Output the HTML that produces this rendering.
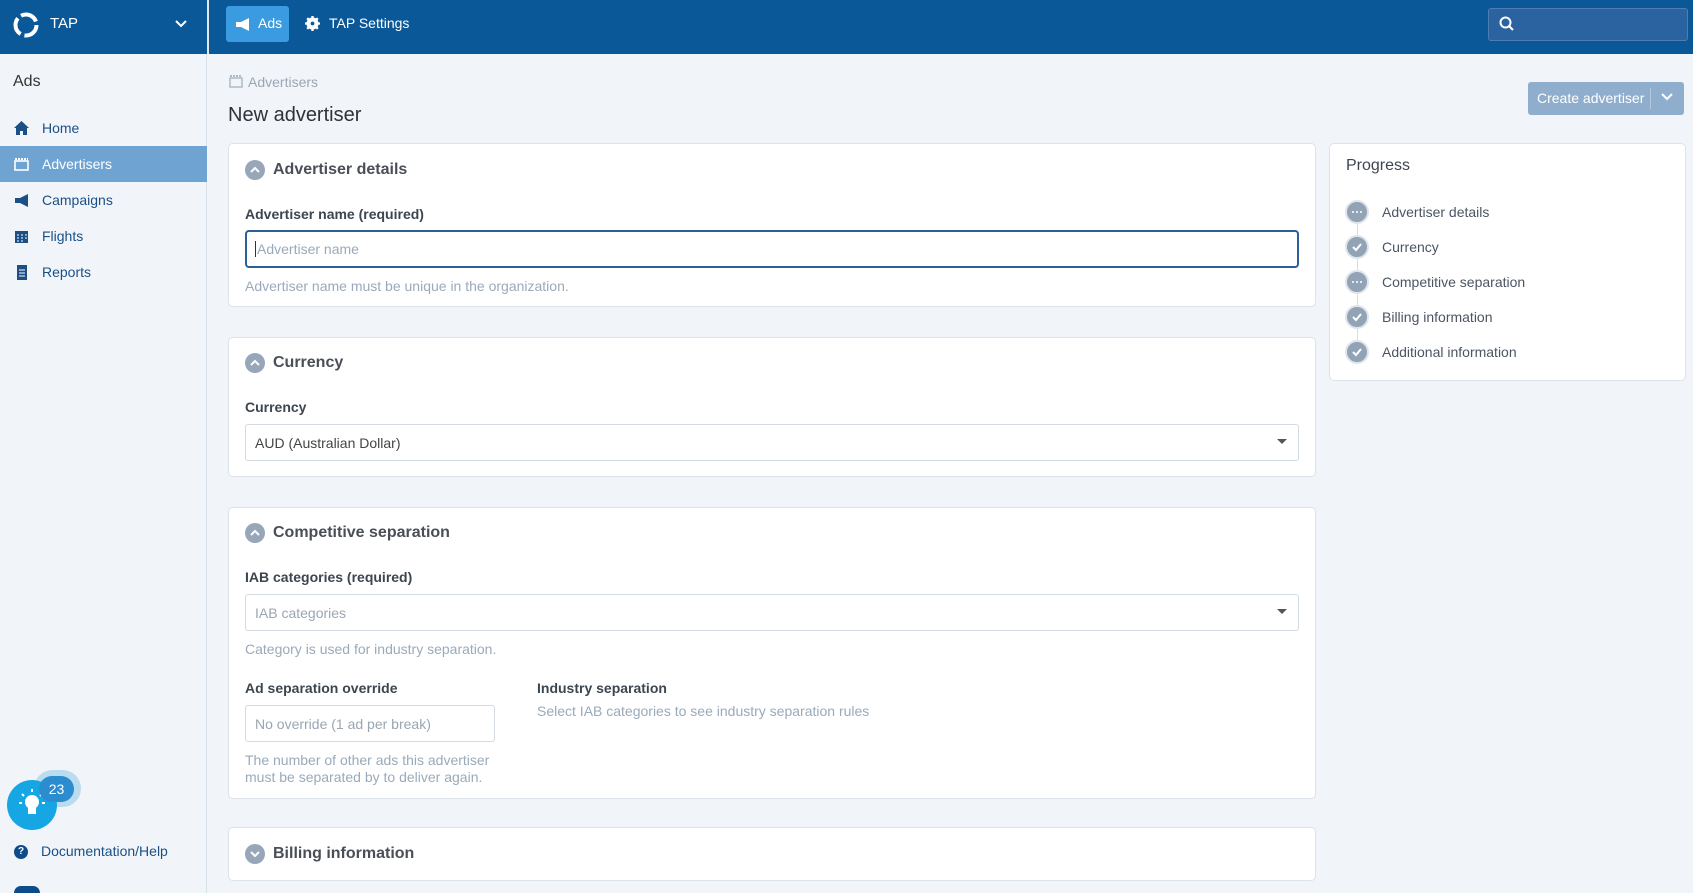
<!DOCTYPE html>
<html style="height:893px;overflow:hidden"><head><style>
*{box-sizing:border-box;margin:0;padding:0}
body{width:1693px;height:893px;overflow:hidden;background:#f1f5f9;font-family:"Liberation Sans",sans-serif;position:relative;color:#333}
.a{position:absolute}
.top{left:0;top:0;width:1693px;height:54px;background:#0a5898}
.side{left:0;top:54px;width:207px;height:839px;border-right:1px solid #d7e1ea;background:#f1f5f9}
.nav{left:0;width:207px;height:36px;display:flex;align-items:center;font-size:14px;color:#1b4f86}
.nav svg{margin-left:14px;margin-right:13px}
.card{background:#fff;border:1px solid #dde3ea;border-radius:5px}
.hd{font-size:16px;font-weight:bold;color:#4a4f57}
.ci{width:20px;height:20px;border-radius:50%;background:#97a6b8}
.lbl{font-size:14px;font-weight:bold;color:#3c4650}
.help{font-size:14px;color:#9aaaba}
.inp{background:#fff;border:1px solid #d3dae2;border-radius:3px;font-size:14px;color:#556;display:flex;align-items:center;padding-left:9px}
.pi{font-size:14px;color:#4b5563}
.pc{width:24px;height:24px;border-radius:50%;background:#92a3b6;border:2px solid #dfe5eb}
</style></head><body>
<div class="a top"></div>
<div class="a" style="left:207px;top:0;width:2px;height:54px;background:#dfe8f1"></div>
<svg class="a" style="left:13px;top:12px" width="26" height="26" viewBox="0 0 26 26"><circle cx="13" cy="13" r="10.5" fill="none" stroke="#fff" stroke-width="4" stroke-dasharray="18 4"/></svg>
<div class="a" style="left:50px;top:15px;color:#fff;font-size:15px">TAP</div>
<svg class="a" style="left:175px;top:19px" width="12" height="10"><path d="M1 2l5 5 5-5" stroke="#fff" stroke-width="2" fill="none"/></svg>
<div class="a" style="left:226px;top:6px;width:63px;height:36px;background:#3b9be0;border-radius:3px"></div>
<svg class="a" style="left:235px;top:18px" width="16" height="13"><path d="M1 4h5l8-4v13l-8-4H1z" fill="#fff"/></svg>
<div class="a" style="left:258px;top:15px;color:#fff;font-size:14px">Ads</div>
<svg class="a" style="left:305px;top:16px" width="15" height="15" viewBox="0 0 16 16"><circle cx="8" cy="8" r="5" fill="none" stroke="#fff" stroke-width="3"/><path d="M8 0v16M0 8h16M2.3 2.3l11.4 11.4M13.7 2.3L2.3 13.7" stroke="#fff" stroke-width="2.5"/><circle cx="8" cy="8" r="2" fill="#0a5898"/></svg>
<div class="a" style="left:329px;top:15px;color:#fff;font-size:14px">TAP Settings</div>
<div class="a" style="left:1488px;top:8px;width:200px;height:33px;background:#2a63a0;border:1px solid #4d7db2;border-radius:3px"></div>
<svg class="a" style="left:1499px;top:16px" width="16" height="16"><circle cx="6.5" cy="6.5" r="5" stroke="#fff" stroke-width="2" fill="none"/><path d="M10 10l4 4" stroke="#fff" stroke-width="2"/></svg>

<div class="a side"></div>
<div class="a" style="left:13px;top:73px;font-size:16px;color:#333">Ads</div>
<div class="a nav" style="top:110px"><svg width="15" height="14"><path d="M7.5 0L0 7h2v7h4v-4h3v4h4V7h2z" fill="#1b4f86"/></svg>Home</div>
<div class="a nav" style="top:146px;background:#6fa4d2;color:#fff"><svg width="15" height="13"><rect x="1" y="3" width="13" height="9" fill="none" stroke="#fff" stroke-width="1.6"/><path d="M1 1h13" stroke="#fff" stroke-width="2" stroke-dasharray="2 1"/></svg>Advertisers</div>
<div class="a nav" style="top:182px"><svg width="15" height="13"><path d="M1 4h5l8-4v13l-8-4H1z" fill="#1b4f86"/></svg>Campaigns</div>
<div class="a nav" style="top:218px"><svg width="15" height="14"><rect x="1" y="2" width="13" height="12" fill="#1b4f86"/><path d="M3 6h2M7 6h2M11 6h2M3 9h2M7 9h2M11 9h2M3 12h2M7 12h2" stroke="#fff"/></svg>Flights</div>
<div class="a nav" style="top:254px"><svg width="15" height="15"><rect x="3" y="0" width="10" height="15" fill="#1b4f86"/><path d="M5 5h6M5 8h6M5 11h6" stroke="#fff"/></svg>Reports</div>
<div class="a" style="left:34px;top:770px;width:47px;height:37px;border-radius:19px;background:#b9dcef"></div>
<div class="a" style="left:7px;top:780px;width:50px;height:50px;border-radius:50%;background:#17a6e4"></div>
<svg class="a" style="left:18px;top:786px" width="28" height="36"><circle cx="14" cy="16" r="7" fill="#fff"/><rect x="10" y="21" width="8" height="7" fill="#fff"/><path d="M14 3v3M4 8l2 2M24 8l-2 2M1 17h3M24 17h3" stroke="#fff" stroke-width="2"/></svg>
<div class="a" style="left:39px;top:776px;width:35px;height:26px;border-radius:13px;background:#2b8dcf;color:#fff;font-size:14px;text-align:center;line-height:26px">23</div>
<div class="a" style="left:14px;top:845px;width:14px;height:14px;border-radius:50%;background:#0d4c8b;color:#fff;font-size:10px;font-weight:bold;text-align:center;line-height:14px">?</div>
<div class="a" style="left:41px;top:843px;font-size:14px;color:#1b4f86">Documentation/Help</div>
<div class="a" style="left:14px;top:886px;width:26px;height:7px;border-radius:13px 13px 0 0;background:#0d4c8b"></div>

<svg class="a" style="left:229px;top:75px" width="14" height="13"><rect x="1" y="3" width="12" height="9" fill="none" stroke="#b0bac5" stroke-width="1.5"/><path d="M1 1h12" stroke="#b0bac5" stroke-width="2" stroke-dasharray="2 1"/></svg>
<div class="a" style="left:248px;top:74px;font-size:14px;color:#9aa6b2">Advertisers</div>
<div class="a" style="left:228px;top:104px;font-size:20px;color:#2f3338">New advertiser</div>
<div class="a" style="left:1528px;top:82px;width:156px;height:33px;background:#8faecd;border-radius:3px;color:#fff;font-size:14px;line-height:33px;padding-left:9px">Create advertiser</div>
<div class="a" style="left:1650px;top:88px;width:1px;height:21px;background:#b3c8dc"></div>
<svg class="a" style="left:1661px;top:93px" width="12" height="9"><path d="M1 1l5 5 5-5" stroke="#fff" stroke-width="2" fill="none"/></svg>

<div class="a card" style="left:228px;top:143px;width:1088px;height:164px"></div>
<div class="a ci" style="left:245px;top:160px"></div>
<svg class="a" style="left:249px;top:165px" width="12" height="10"><path d="M2 7l4-4 4 4" stroke="#fff" stroke-width="2" fill="none"/></svg>
<div class="a hd" style="left:273px;top:161px">Advertiser details</div>
<div class="a lbl" style="left:245px;top:206px">Advertiser name (required)</div>
<div class="a inp" style="left:245px;top:230px;width:1054px;height:38px;border:2px solid #2a5f9a;border-radius:4px;color:#9aa9b8;padding-left:8px"><span style="border-left:1px solid #333;padding-left:1px">Advertiser name</span></div>
<div class="a help" style="left:245px;top:278px">Advertiser name must be unique in the organization.</div>

<div class="a card" style="left:228px;top:337px;width:1088px;height:140px"></div>
<div class="a ci" style="left:245px;top:353px"></div>
<svg class="a" style="left:249px;top:358px" width="12" height="10"><path d="M2 7l4-4 4 4" stroke="#fff" stroke-width="2" fill="none"/></svg>
<div class="a hd" style="left:273px;top:354px">Currency</div>
<div class="a lbl" style="left:245px;top:399px">Currency</div>
<div class="a inp" style="left:245px;top:424px;width:1054px;height:37px;color:#444">AUD (Australian Dollar)</div>
<svg class="a" style="left:1277px;top:439px" width="10" height="6"><path d="M0 0h10L5 5z" fill="#555"/></svg>

<div class="a card" style="left:228px;top:507px;width:1088px;height:292px"></div>
<div class="a ci" style="left:245px;top:523px"></div>
<svg class="a" style="left:249px;top:528px" width="12" height="10"><path d="M2 7l4-4 4 4" stroke="#fff" stroke-width="2" fill="none"/></svg>
<div class="a hd" style="left:273px;top:524px">Competitive separation</div>
<div class="a lbl" style="left:245px;top:569px">IAB categories (required)</div>
<div class="a inp" style="left:245px;top:594px;width:1054px;height:37px;color:#9aa6b2">IAB categories</div>
<svg class="a" style="left:1277px;top:609px" width="10" height="6"><path d="M0 0h10L5 5z" fill="#555"/></svg>
<div class="a help" style="left:245px;top:641px">Category is used for industry separation.</div>
<div class="a lbl" style="left:245px;top:680px">Ad separation override</div>
<div class="a lbl" style="left:537px;top:680px">Industry separation</div>
<div class="a inp" style="left:245px;top:705px;width:250px;height:37px;color:#9aa6b2">No override (1 ad per break)</div>
<div class="a help" style="left:537px;top:703px">Select IAB categories to see industry separation rules</div>
<div class="a help" style="left:245px;top:752px;line-height:17px">The number of other ads this advertiser<br>must be separated by to deliver again.</div>

<div class="a card" style="left:228px;top:827px;width:1088px;height:54px"></div>
<div class="a ci" style="left:245px;top:844px"></div>
<svg class="a" style="left:249px;top:849px" width="12" height="10"><path d="M2 3l4 4 4-4" stroke="#fff" stroke-width="2" fill="none"/></svg>
<div class="a hd" style="left:273px;top:845px">Billing information</div>

<div class="a card" style="left:1329px;top:143px;width:357px;height:238px"></div>
<div class="a" style="left:1346px;top:157px;font-size:16px;color:#3c4650">Progress</div>
<div class="a" style="left:1357px;top:212px;width:1px;height:140px;background:#d5dde5"></div>
<div class="a pc" style="left:1345px;top:200px"></div><svg class="a" style="left:1351px;top:210px" width="12" height="4"><circle cx="2" cy="2" r="1" fill="#fff"/><circle cx="6" cy="2" r="1" fill="#fff"/><circle cx="10" cy="2" r="1" fill="#fff"/></svg><div class="a pi" style="left:1382px;top:204px">Advertiser details</div>
<div class="a pc" style="left:1345px;top:235px"></div><svg class="a" style="left:1351px;top:241px" width="12" height="12"><path d="M2 6l3 3 5-6" stroke="#fff" stroke-width="2" fill="none"/></svg><div class="a pi" style="left:1382px;top:239px">Currency</div>
<div class="a pc" style="left:1345px;top:270px"></div><svg class="a" style="left:1351px;top:280px" width="12" height="4"><circle cx="2" cy="2" r="1" fill="#fff"/><circle cx="6" cy="2" r="1" fill="#fff"/><circle cx="10" cy="2" r="1" fill="#fff"/></svg><div class="a pi" style="left:1382px;top:274px">Competitive separation</div>
<div class="a pc" style="left:1345px;top:305px"></div><svg class="a" style="left:1351px;top:311px" width="12" height="12"><path d="M2 6l3 3 5-6" stroke="#fff" stroke-width="2" fill="none"/></svg><div class="a pi" style="left:1382px;top:309px">Billing information</div>
<div class="a pc" style="left:1345px;top:340px"></div><svg class="a" style="left:1351px;top:346px" width="12" height="12"><path d="M2 6l3 3 5-6" stroke="#fff" stroke-width="2" fill="none"/></svg><div class="a pi" style="left:1382px;top:344px">Additional information</div>
</body></html>
